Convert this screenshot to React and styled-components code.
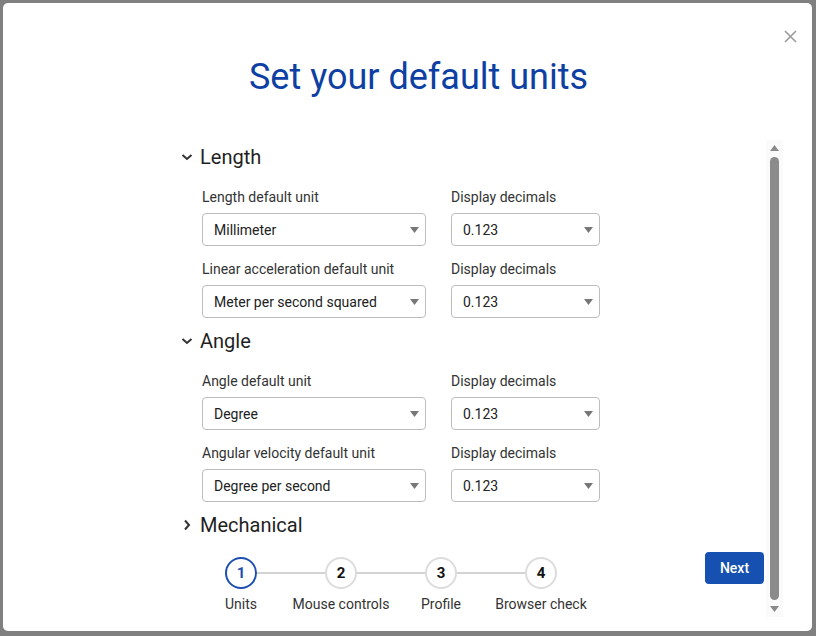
import React from 'react'
import styled, { createGlobalStyle } from 'styled-components'

const GlobalStyle = createGlobalStyle`
  html, body {
    margin: 0;
    padding: 0;
    background: #808080;
    font-family: Roboto, "Noto Sans", "Liberation Sans", sans-serif;
  }
  * { box-sizing: border-box; }
`

const Dialog = styled.div`
  position: relative;
  margin: 3px 4px 0 3px;
  height: 628px;
  background: white;
  border-radius: 5px;
  display: flex;
  flex-direction: column;
`

const Close = styled.button`
  position: absolute;
  top: 25px;
  right: 14px;
  width: 16px;
  height: 16px;
  padding: 0;
  border: none;
  background: none;
  display: flex;
  align-items: center;
  justify-content: center;
`

const Title = styled.h1`
  margin: 54px 0 0;
  padding-left: 22px;
  height: 40px;
  line-height: 40px;
  text-align: center;
  font-size: 36px;
  font-weight: 400;
  color: #0e3fa3;
`

const Body = styled.div`
  display: flex;
  margin-top: 43px;
  height: 477px;
  padding-right: 29px;
`

const Content = styled.div`
  flex: 1;
  display: flex;
  flex-direction: column;
  padding: 5px 2px 0 177px;
`

const SectionHeader = styled.div`
  display: flex;
  align-items: center;
  height: 24px;
  font-size: 20px;
  font-weight: 400;
  color: #1f1f1f;
  margin-top: ${p => p.$first ? '0' : '11px'};
`

const Chevron = styled.span`
  width: 20px;
  display: flex;
  align-items: center;
  padding-left: 1px;
`

const Fields = styled.div`
  display: grid;
  grid-template-columns: 224px 149px;
  column-gap: 25px;
  margin-left: 22px;
  padding-top: 18px;
`

const Field = styled.div`
  display: flex;
  flex-direction: column;
  margin-top: ${p => p.$top ? '0' : '13px'};
`

const Label = styled.label`
  height: 20px;
  line-height: 20px;
  font-size: 14px;
  color: #333;
  margin-bottom: 6px;
`

const Select = styled.div`
  height: 33px;
  border: 1px solid #bdbdbd;
  border-radius: 4px;
  display: flex;
  align-items: center;
  justify-content: space-between;
  padding: 1px 6px 0 11px;
  font-size: 14px;
  color: #222;
`

const Footer = styled.div`
  display: flex;
  align-items: flex-start;
  margin-top: 15px;
`

const Stepper = styled.div`
  display: flex;
  margin-left: 11px;
  padding-top: 5px;
`

const Step = styled.div`
  width: 100px;
  display: flex;
  flex-direction: column;
  align-items: center;
  position: relative;

  &:not(:last-child)::after {
    content: "";
    position: absolute;
    top: 15px;
    left: 66px;
    width: 68px;
    height: 2px;
    background: #d3d3d3;
  }
`

const Circle = styled.div`
  width: 32px;
  height: 32px;
  border-radius: 50%;
  border: 2px solid ${p => p.$active ? '#1d4fb0' : '#dcdcdc'};
  color: ${p => p.$active ? '#1d4fb0' : '#111'};
  font-weight: 700;
  font-size: 15px;
  display: flex;
  align-items: center;
  justify-content: center;
`

const StepLabel = styled.div`
  margin-top: 5px;
  height: 20px;
  line-height: 20px;
  font-size: 14px;
  color: #333;
  white-space: nowrap;
`

const NextButton = styled.button`
  margin-left: auto;
  width: 59px;
  height: 32px;
  border: none;
  border-radius: 4px;
  background: #1650b0;
  color: white;
  font-family: inherit;
  font-size: 14px;
  font-weight: 500;
`

const Scrollbar = styled.div`
  width: 17px;
  height: 100%;
  background: #fafafa;
  display: flex;
  flex-direction: column;
  align-items: center;
  padding: 5px 0;
  gap: 6px;
`

const Thumb = styled.div`
  flex: 1;
  width: 9px;
  border-radius: 5px;
  background: #8b8b8b;
`

const Arrow = ({ up }) => (
  <svg width="9" height="6" viewBox="0 0 9 6">
    <path d={up ? 'M0 6 L4.5 0 L9 6 Z' : 'M0 0 L9 0 L4.5 6 Z'} fill="#8a8a8a" />
  </svg>
)

const Caret = () => (
  <svg width="9" height="6" viewBox="0 0 9 6">
    <path d="M0 0 L9 0 L4.5 6 Z" fill="#777" />
  </svg>
)

const ChevronIcon = ({ open }) => (
  <svg width="12" height="12" viewBox="0 0 12 12">
    <path
      d={open ? 'M1.5 4 L6 8 L10.5 4' : 'M4 1.5 L8 6 L4 10.5'}
      fill="none"
      stroke="#333"
      strokeWidth="2"
    />
  </svg>
)

const sections = [
  {
    name: 'Length',
    open: true,
    rows: [
      { label: 'Length default unit', value: 'Millimeter' },
      { label: 'Linear acceleration default unit', value: 'Meter per second squared' }
    ]
  },
  {
    name: 'Angle',
    open: true,
    rows: [
      { label: 'Angle default unit', value: 'Degree' },
      { label: 'Angular velocity default unit', value: 'Degree per second' }
    ]
  },
  { name: 'Mechanical', open: false, rows: [] }
]

const steps = ['Units', 'Mouse controls', 'Profile', 'Browser check']

export default function App() {
  return (
    <>
      <GlobalStyle />
      <Dialog>
        <Close aria-label="Close">
          <svg width="13" height="13" viewBox="0 0 13 13">
            <path d="M1 1 L12 12 M12 1 L1 12" stroke="#9a9a9a" strokeWidth="1.6" />
          </svg>
        </Close>
        <Title>Set your default units</Title>
        <Body>
          <Content>
            {sections.map((s, i) => (
              <React.Fragment key={s.name}>
                <SectionHeader $first={i === 0}>
                  <Chevron><ChevronIcon open={s.open} /></Chevron>
                  {s.name}
                </SectionHeader>
                {s.rows.length > 0 && (
                  <Fields>
                    {s.rows.map((r, j) => (
                      <React.Fragment key={r.label}>
                        <Field $top={j === 0}>
                          <Label>{r.label}</Label>
                          <Select>{r.value}<Caret /></Select>
                        </Field>
                        <Field $top={j === 0}>
                          <Label>Display decimals</Label>
                          <Select>0.123<Caret /></Select>
                        </Field>
                      </React.Fragment>
                    ))}
                  </Fields>
                )}
              </React.Fragment>
            ))}
            <Footer>
              <Stepper>
                {steps.map((name, i) => (
                  <Step key={name}>
                    <Circle $active={i === 0}>{i + 1}</Circle>
                    <StepLabel>{name}</StepLabel>
                  </Step>
                ))}
              </Stepper>
              <NextButton>Next</NextButton>
            </Footer>
          </Content>
          <Scrollbar>
            <Arrow up />
            <Thumb />
            <Arrow />
          </Scrollbar>
        </Body>
      </Dialog>
    </>
  )
}
